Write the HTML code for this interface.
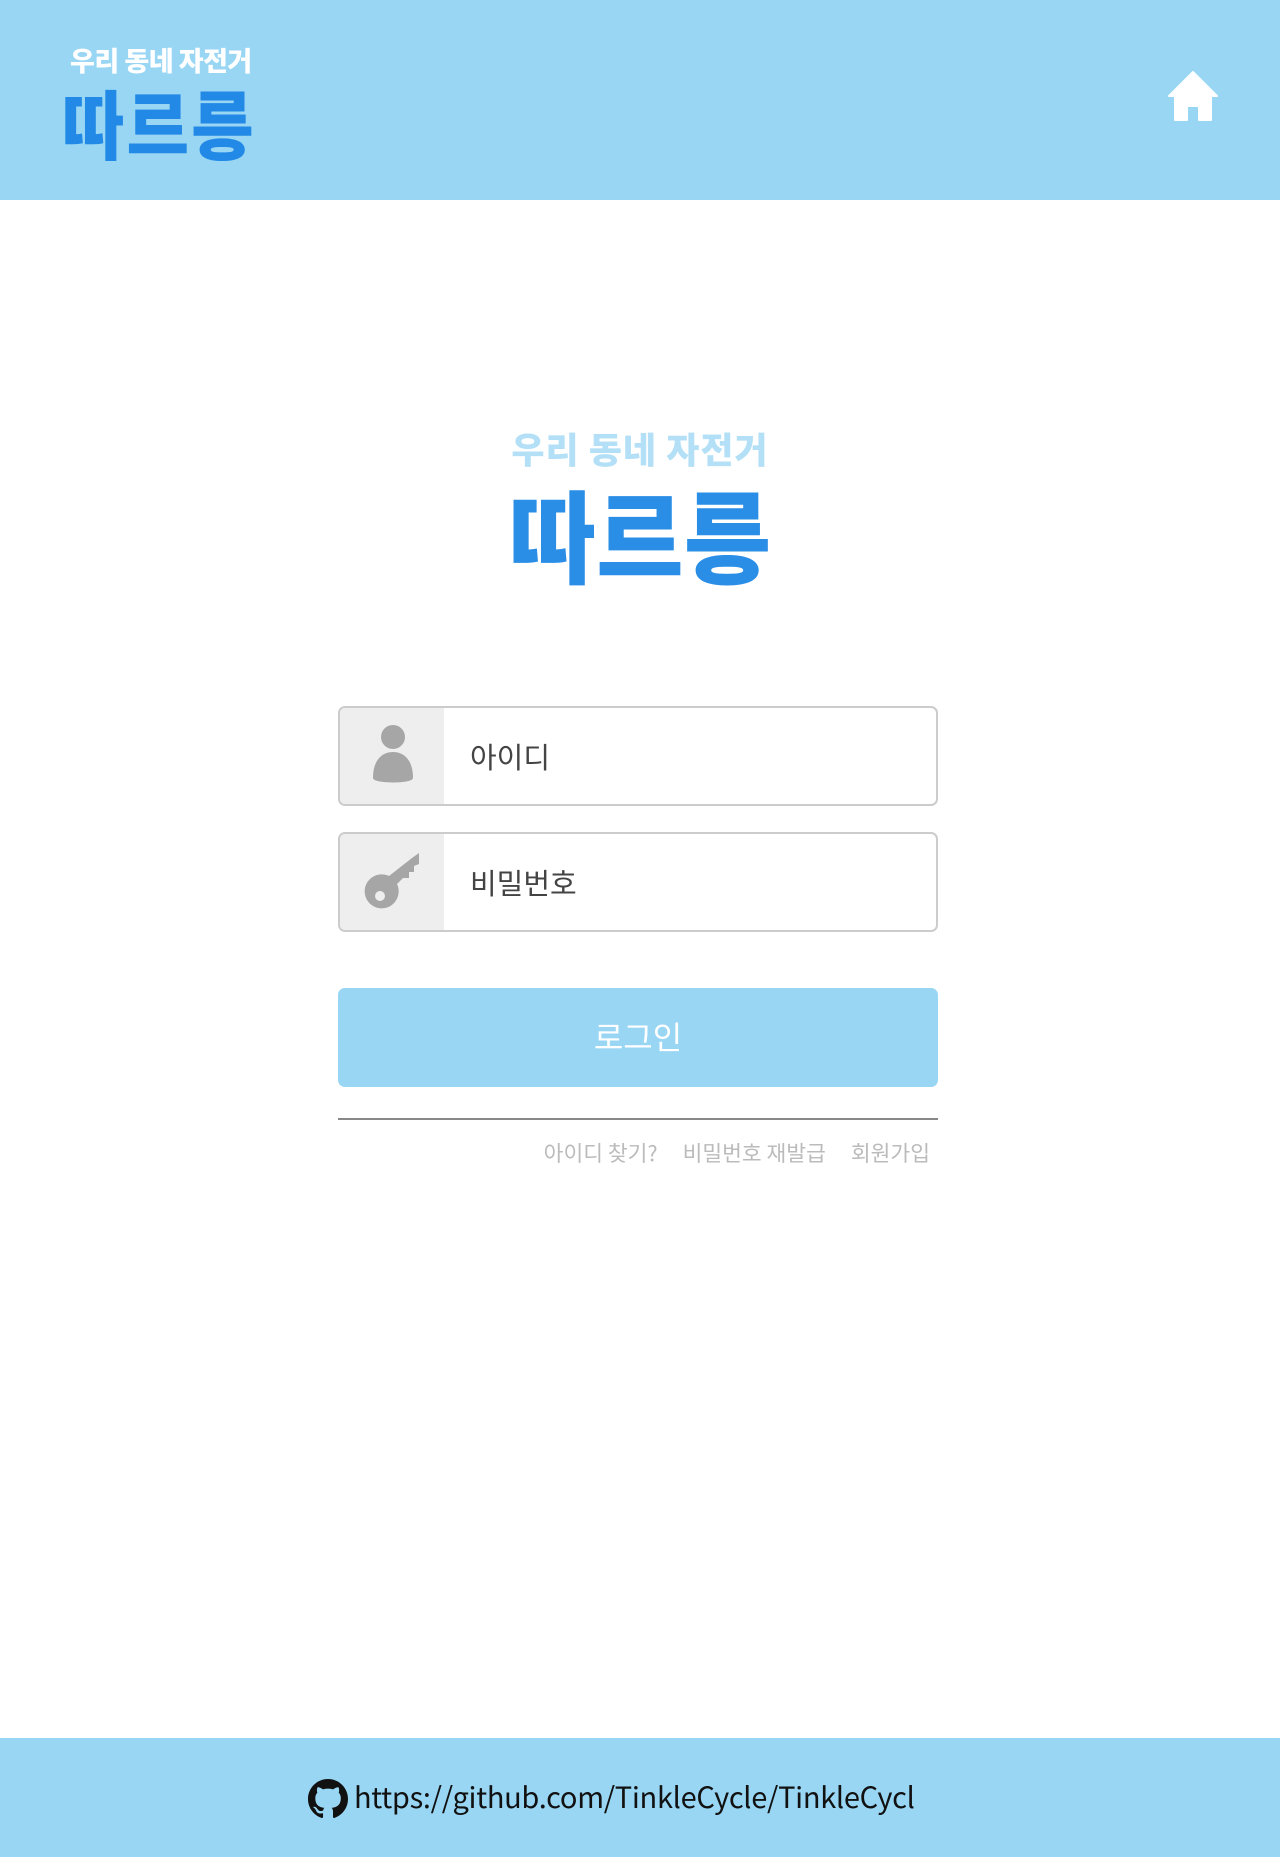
<!DOCTYPE html>
<html><head><meta charset="utf-8"><style>
*{margin:0;padding:0;box-sizing:border-box}
body{width:1280px;height:1860px;position:relative;background:#fff;font-family:"Liberation Sans","Noto Sans CJK KR",sans-serif;overflow:hidden}
.hdr{position:absolute;left:0;top:0;width:1280px;height:200px;background:#98d6f4}
.k{font-family:"Noto Sans CJK KR",sans-serif;font-weight:900;position:absolute;white-space:nowrap;line-height:1}
.ft{position:absolute;left:0;top:1738px;width:1280px;height:119px;background:#98d6f4}
.inp{position:absolute;left:338px;width:600px;height:100px;border:2px solid #ccc;border-radius:7px;overflow:hidden;background:#fff}
.inp .ic{position:absolute;left:0;top:0;width:104px;height:100%;background:#eee}
.inp .t{position:absolute;left:130px;top:0;line-height:96px;font-size:29px;color:#444;font-family:"Noto Sans CJK KR",sans-serif}
</style></head><body>
<div class="hdr">
 <div class="k" style="left:70px;top:46px;font-size:27px;color:#fff;letter-spacing:-0.5px">우리 동네 자전거</div>
 <div class="k" style="left:62px;top:84px;font-size:68px;color:#2389e6;letter-spacing:2px;transform:scaleY(1.1);transform-origin:top left">따르릉</div>
 <svg style="position:absolute;left:1167px;top:70px" width="52" height="52" viewBox="0 0 52 52"><path d="M26 2 L50 26 L44 26 L44 50 L32 50 L32 36 L20 36 L20 50 L8 50 L8 26 L2 26 Z" fill="#fff" stroke="#fff" stroke-width="2" stroke-linejoin="round"/></svg>
</div>
<div class="k" style="left:0;width:1280px;text-align:center;top:430px;font-size:36px;color:#b4e0f7;letter-spacing:1px">우리 동네 자전거</div>
<div class="k" style="left:0;width:1280px;text-align:center;top:482px;font-size:95px;color:#2a8ee6;letter-spacing:0px;transform:scaleY(1.06);transform-origin:top">따르릉</div>
<div class="inp" style="top:706px"><div class="ic"><svg width="104" height="96" viewBox="0 0 104 96"><circle cx="53" cy="29" r="12" fill="#a6a6a6"/><path d="M33 70 C33 52 42 44 53 44 C64 44 73 52 73 70 C73 76 33 76 33 70Z" fill="#a6a6a6"/></svg></div><div class="t">아이디</div></div>
<div class="inp" style="top:832px"><div class="ic"><svg width="104" height="96" viewBox="0 0 104 96"><path d="M72 24 L79 19 L79 30 L74 32 L74 38 L69 38 L69 44 L63 44 L57 50 A17 17 0 1 1 49 42 Z" fill="#a6a6a6"/><circle cx="40" cy="62" r="5" fill="#eee"/></svg></div><div class="t">비밀번호</div></div>
<div style="position:absolute;left:338px;top:988px;width:600px;height:99px;background:#98d6f4;border-radius:7px;color:#fff;font-family:'Noto Sans CJK KR',sans-serif;font-size:32px;text-align:center;line-height:96px">로그인</div>
<div style="position:absolute;left:338px;top:1118px;width:600px;height:2px;background:#888"></div>
<div style="position:absolute;left:338px;top:1137px;width:592px;text-align:right;font-family:'Noto Sans CJK KR',sans-serif;font-size:21.5px;color:#bbb"><span>아이디 찾기?</span><span style="margin-left:25px">비밀번호 재발급</span><span style="margin-left:25px">회원가입</span></div>
<div class="ft">
 <svg style="position:absolute;left:308px;top:41px" width="40" height="40" viewBox="0 0 16 16"><path fill="#111" d="M8 0C3.580 0 0 3.58 0 8c0 3.54 2.29 6.53 5.47 7.59.4.07.55-.17.55-.38 0-.19-.01-.82-.01-1.49-2.01.37-2.530-.49-2.69-.94-.09-.23-.48-.94-.82-1.130-.28-.15-.68-.52-.01-.53.63-.01 1.080.58 1.23.82.72 1.21 1.87.87 2.33.66.07-.52.28-.87.51-1.07-1.78-.2-3.64-.89-3.64-3.95 0-.87.31-1.59.82-2.150-.08-.2-.36-1.02.08-2.12 0 0 .67-.21 2.2.82.64-.18 1.32-.27 2-.27.68 0 1.36.09 2 .27 1.53-1.04 2.2-.82 2.2-.82.44 1.1.16 1.92.08 2.12.51.56.82 1.27.82 2.15 0 3.07-1.87 3.75-3.65 3.95.29.25.54.73.54 1.48 0 1.07-.01 1.93-.01 2.2 0 .21.15.46.55.38A8.013 8.013 0 0016 8c0-4.42-3.58-8-8-8z"/></svg>
 <div style="position:absolute;left:354px;top:36px;font-family:'Noto Sans CJK KR',sans-serif;font-size:29px;color:#111;line-height:44px;letter-spacing:-0.3px">https://github.com/TinkleCycle/TinkleCycl</div>
</div>
</body></html>
